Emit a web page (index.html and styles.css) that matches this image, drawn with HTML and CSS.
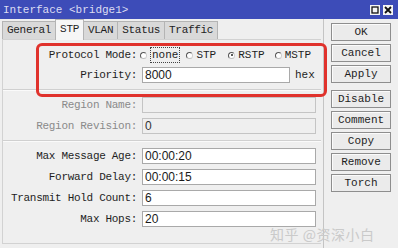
FILE: index.html
```html
<!DOCTYPE html>
<html>
<head>
<meta charset="utf-8">
<link rel="stylesheet" href="styles.css">
</head>
<body>
<div class="window">
  <div class="titlebar">
    <span class="title">Interface &lt;bridge1&gt;</span>
    <div class="tb-btns">
      <span class="tb-btn"><svg width="10" height="10" viewBox="0 0 10 10"><rect x="2" y="2" width="6" height="6" fill="none" stroke="#111" stroke-width="1.3"/></svg></span>
      <span class="tb-btn"><svg width="10" height="10" viewBox="0 0 10 10"><path d="M2 2L8 8M8 2L2 8" stroke="#111" stroke-width="1.8"/></svg></span>
    </div>
  </div>
  <div class="main">
    <div class="left">
      <div class="tabs">
        <div class="tab">General</div>
        <div class="tab active">STP</div>
        <div class="tab">VLAN</div>
        <div class="tab">Status</div>
        <div class="tab">Traffic</div>
      </div>
      <div class="panel">
        <div class="group first">
          <div class="row">
            <div class="label">Protocol Mode:</div>
            <div class="radios">
              <span class="radio"></span><span class="opt focus">none</span>
              <span class="radio r2"></span><span class="opt">STP</span>
              <span class="radio checked r3"></span><span class="opt">RSTP</span>
              <span class="radio r4"></span><span class="opt">MSTP</span>
            </div>
          </div>
          <div class="row">
            <div class="label">Priority:</div>
            <div class="field short">8000</div>
            <span class="suffix">hex</span>
          </div>
        </div>
        <div class="sep"></div>
        <div class="group">
          <div class="row">
            <div class="label dim">Region Name:</div>
            <div class="field disabled"></div>
          </div>
          <div class="row">
            <div class="label dim">Region Revision:</div>
            <div class="field disabled">0</div>
          </div>
        </div>
        <div class="sep"></div>
        <div class="group">
          <div class="row">
            <div class="label">Max Message Age:</div>
            <div class="field">00:00:20</div>
          </div>
          <div class="row">
            <div class="label">Forward Delay:</div>
            <div class="field">00:00:15</div>
          </div>
          <div class="row">
            <div class="label">Transmit Hold Count:</div>
            <div class="field">6</div>
          </div>
          <div class="row">
            <div class="label">Max Hops:</div>
            <div class="field">20</div>
          </div>
        </div>
      </div>
    </div>
    <div class="buttons">
      <div class="btn">OK</div>
      <div class="btn">Cancel</div>
      <div class="btn">Apply</div>
      <div class="btn gap">Disable</div>
      <div class="btn">Comment</div>
      <div class="btn">Copy</div>
      <div class="btn">Remove</div>
      <div class="btn">Torch</div>
    </div>
  </div>
  <div class="highlight"></div>
  <div class="watermark">知乎 @资深小白</div>
</div>
</body>
</html>
```

FILE: styles.css
```css
* { box-sizing: border-box; }
html, body { margin: 0; padding: 0; }
body {
  width: 398px;
  height: 248px;
  overflow: hidden;
  background: #efefef;
  font-family: "Liberation Mono", "Courier New", Cousine, monospace;
  font-size: 11px;
  color: #1e1e1e;
}
.window {
  position: relative;
  width: 398px;
  height: 248px;
  display: flex;
  flex-direction: column;
  background: #efefef;
}
.titlebar {
  height: 19px;
  flex: none;
  background: #3d4cb8;
  color: #dcdcf2;
  font-size: 11px;
  display: flex;
  align-items: center;
  justify-content: space-between;
  padding: 0 5px 0 3px;
}
.tb-btns { display: flex; gap: 3px; }
.tb-btn {
  width: 10px;
  height: 10px;
  background: #f4f4f4;
  display: block;
}
.tb-btn svg { display: block; }
.main {
  flex: 1;
  display: flex;
}
.left {
  width: 323px;
  display: flex;
  flex-direction: column;
}
.tabs {
  height: 20px;
  display: flex;
  align-items: flex-end;
  padding-left: 2px;
}
.tab {
  height: 18px;
  line-height: 16px;
  padding: 0 4px;
  background: #d9d9d9;
  border: 1px solid #b4b4b4;
  border-bottom: none;
  margin-right: -1px;
  letter-spacing: -0.3px;
}
.tab.active {
  line-height: 18px;
  background: #f6f6f6;
  position: relative;
  z-index: 1;
  margin-bottom: -1px;
  height: 21px;
}
.panel {
  flex: 1;
  margin: 0 2px 4px 2px;
  border: 1px solid #d2d2d2;
  border-right: none;
  background: #efefef;
  display: flex;
  flex-direction: column;
}
.group {
  display: flex;
  flex-direction: column;
  gap: 5px;
  margin-top: 6px;
}
.group.first { padding-top: 1px; gap: 4px; }
.sep {
  margin-top: 6px;
  height: 2px;
  border-top: 1px solid #d0d0d0;
  border-bottom: 1px solid #fafafa;
}
.row {
  display: flex;
  align-items: center;
  height: 16px;
}
.label {
  width: 134px;
  flex: none;
  text-align: right;
  margin-right: 5px;
  white-space: nowrap;
  letter-spacing: -0.3px;
}
.label.dim { color: #8a8a8a; }
.field {
  width: 174px;
  height: 16px;
  background: #fff;
  border: 1px solid #a9a9a9;
  font-family: "Liberation Sans", Arial, sans-serif;
  font-size: 12px;
  line-height: 14px;
  padding-left: 2px;
  color: #1a1a1a;
}
.field.short { width: 148px; }
.field.disabled {
  background: #efefef;
  border-color: #c4c4c4;
  color: #333;
}
.suffix { margin-left: 5px; }
.radios {
  display: flex;
  align-items: center;
  margin-left: -2px;
}
.radio {
  width: 7px;
  height: 7px;
  border-radius: 50%;
  border: 1px solid #555;
  border-right-color: #cfcfcf;
  border-bottom-color: #bdbdbd;
  background: #fff;
  margin-right: 3px;
  position: relative;
}
.radio.checked::after {
  content: "";
  position: absolute;
  left: 1.5px;
  top: 1.5px;
  width: 2px;
  height: 2px;
  border-radius: 50%;
  background: #222;
}
.r2 { margin-left: 6px; }
.r3 { margin-left: 12px; }
.r4 { margin-left: 10px; }
.opt { font-size: 11px; line-height: 14px; }
.opt.focus {
  border: 1px dotted #444;
  padding: 0 1px;
}
.buttons {
  width: 75px;
  flex: none;
  border-left: 1px solid #c4c4c4;
  padding: 4px 0 0 7px;
  display: flex;
  flex-direction: column;
  gap: 3px;
}
.btn {
  width: 60px;
  height: 18px;
  border: 1px solid #8e8e8e;
  background: #ebebeb;
  box-shadow: inset 1px 1px 0 #fbfbfb;
  text-align: center;
  line-height: 16px;
  color: #1e1e1e;
}
.btn.gap { margin-top: 4px; }
.highlight {
  position: absolute;
  left: 36px;
  top: 43px;
  width: 291px;
  height: 54px;
  border: 3px solid #e0322c;
  border-radius: 6px;
  pointer-events: none;
}
.watermark {
  position: absolute;
  left: 270px;
  top: 224px;
  font-family: "Noto Sans CJK SC", sans-serif;
  font-size: 14px;
  color: #cacaca;
  letter-spacing: 0.5px;
}
```
